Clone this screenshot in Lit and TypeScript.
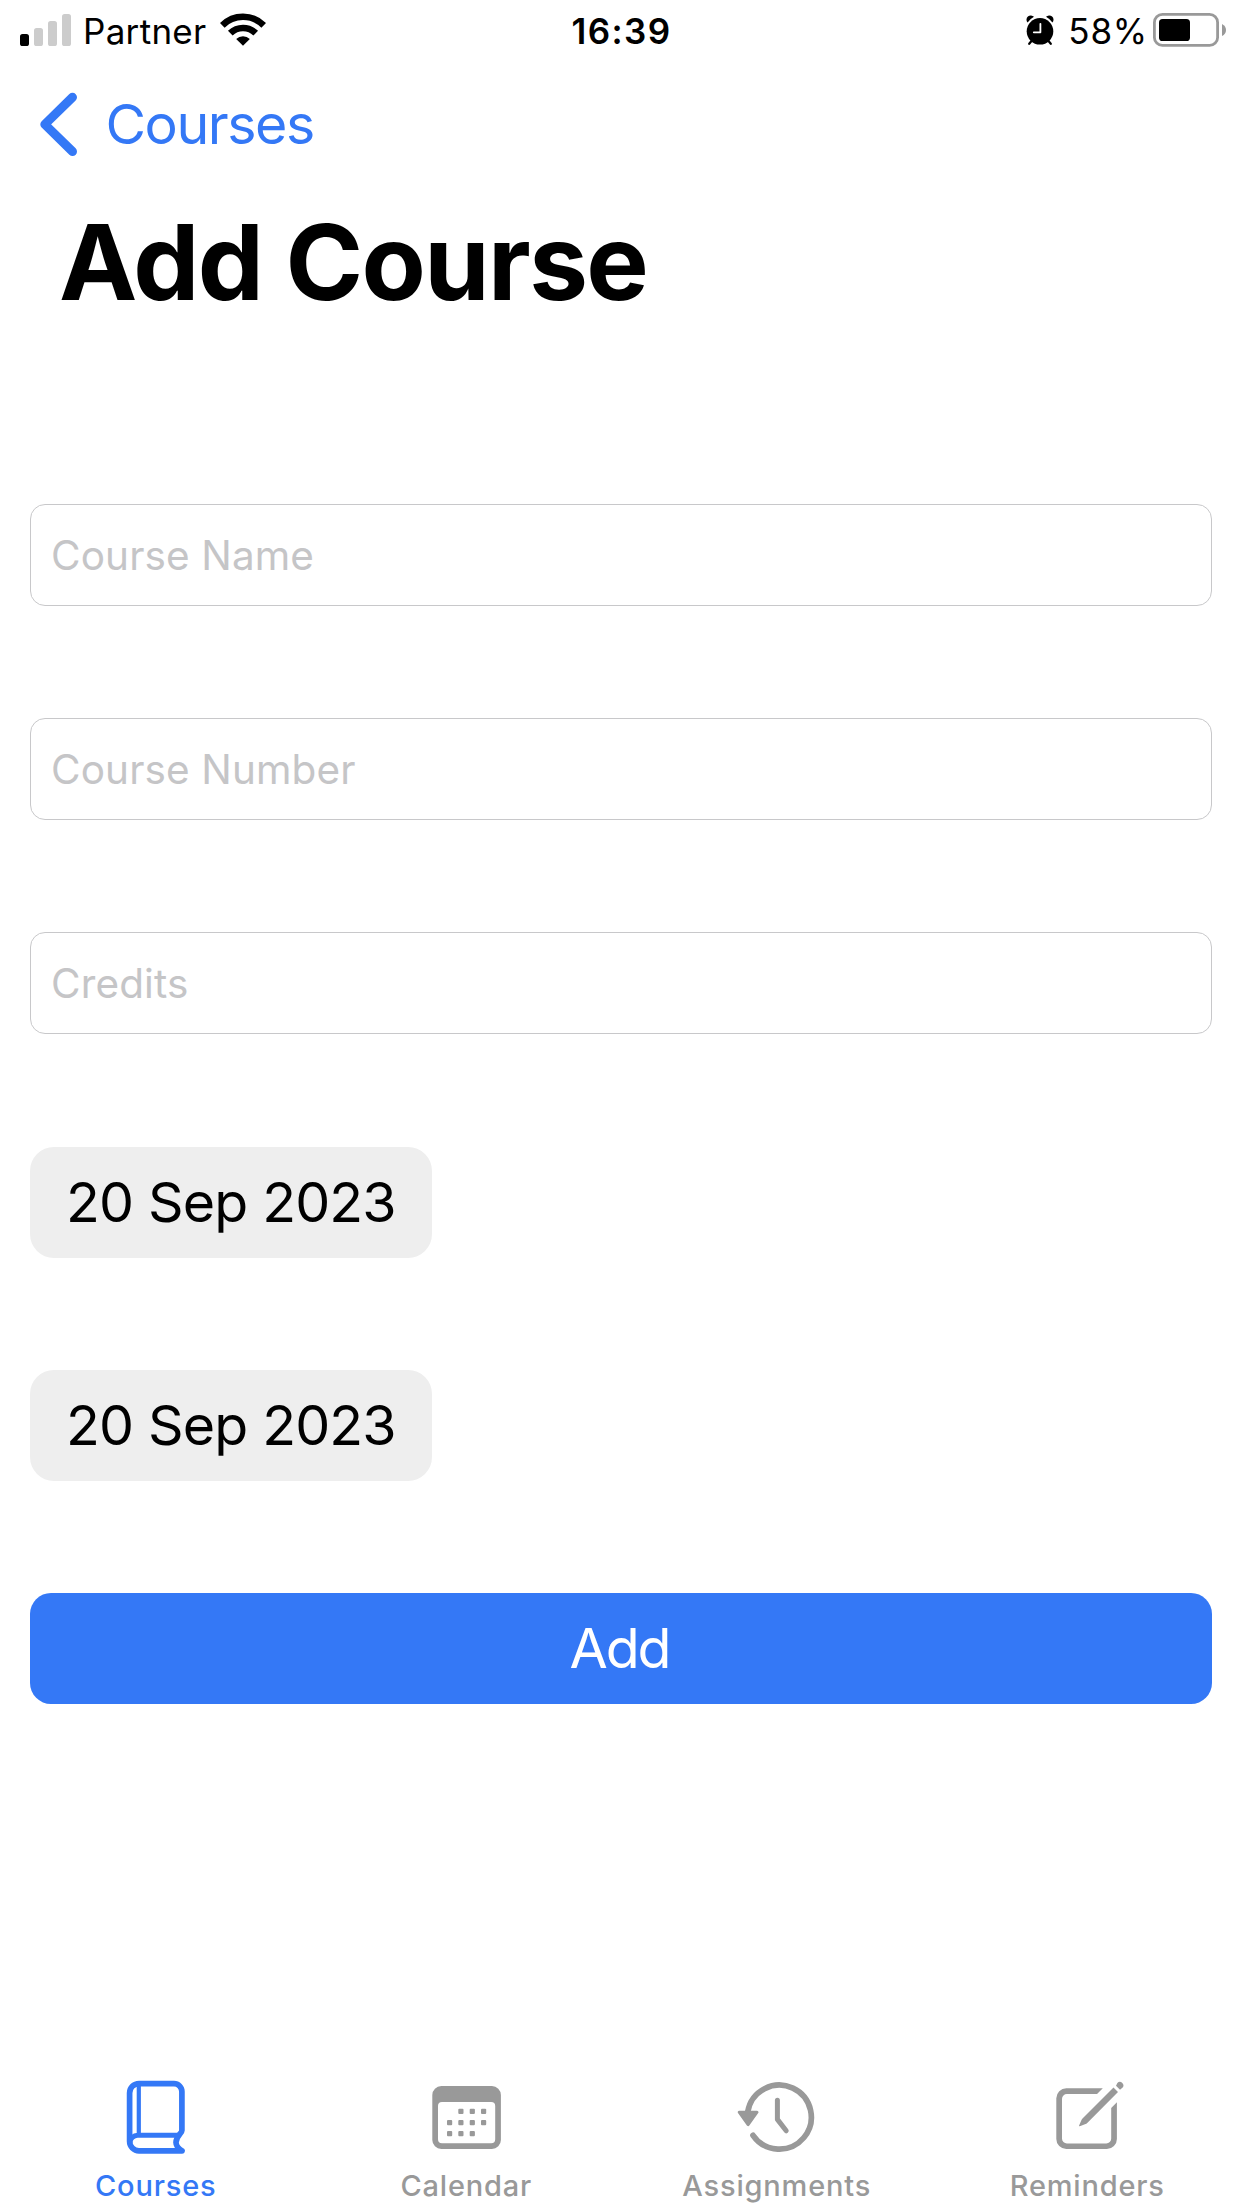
import { LitElement, html, css, svg } from "lit";
import { customElement, property } from "lit/decorators.js";

const DOTS: [number, number][] = [
  [34.9, 35.4], [46.3, 35.4], [57.6, 35.4],
  [23.6, 46.6], [34.9, 46.6], [46.3, 46.6], [57.6, 46.6],
  [23.6, 57.7], [34.9, 57.7], [46.3, 57.7],
];

const ICONS = {
  book: svg`
    <g fill="none" stroke="currentColor" stroke-width="5.7" stroke-linejoin="round">
      <path stroke-linecap="round" d="M67 74.8H24A9.5 9.5 0 0 1 14.6 65.3V17A9.4 9.4 0 0 1 24 7.6H59A7.9 7.9 0 0 1 66.9 15.5V54.5C66.9 57.5 61 60 61 66.5C61 70 63.5 72.5 67 74.8"/>
      <path stroke-width="5" d="M14.8 67A8 8 0 0 1 23 59.2H63.5"/>
      <path stroke-width="4.2" d="M23.8 8V59"/>
    </g>`,
  calendar: svg`
    <path fill="currentColor" fill-rule="evenodd" d="M15.3 10H65.9A9 9 0 0 1 74.9 19V64A9 9 0 0 1 65.9 73H15.3A9 9 0 0 1 6.3 64V19A9 9 0 0 1 15.3 10ZM16 26A4 4 0 0 0 12 30V63.2A4 4 0 0 0 16 67.2H65.2A4 4 0 0 0 69.2 63.2V30A4 4 0 0 0 65.2 26Z"/>
    ${DOTS.map(([x, y]) => svg`<rect x=${x - 2.6} y=${y - 2.6} width="5.2" height="5.2" rx="1" fill="currentColor"/>`)}`,
  history: svg`
    <path fill="none" stroke="currentColor" stroke-width="5.7" stroke-linecap="round" d="M11.8 35.5A32 32 0 1 1 17 59.3"/>
    <path fill="currentColor" stroke="currentColor" stroke-width="3" stroke-linejoin="round" d="M3.2 36.2H21L12.1 48.6Z"/>
    <path fill="none" stroke="currentColor" stroke-width="5" stroke-linecap="round" stroke-linejoin="round" d="M41.4 24.2V43.4L50.2 54.8"/>`,
  compose: svg`
    <path fill="currentColor" d="M55.8 12.3H19.3A10 10 0 0 0 9.3 22.3V63A10 10 0 0 0 19.3 73H59.9A10 10 0 0 0 69.9 63V26.2L64.2 31.9V62.5A4.9 4.9 0 0 1 59.3 67.4H19.9A4.9 4.9 0 0 1 15 62.5V23A4.9 4.9 0 0 1 19.9 18.1H50Z"/>
    <path fill="currentColor" d="M66.5 11.4L71 16L40 47.2Q39.4 47.7 38.6 48L32.8 50.3Q31.8 50.5 32.1 49.5L34.6 43.7Q34.9 43 35.5 42.4Z"/>
    <path fill="currentColor" d="M69 9.7L70.4 7.1Q72.6 4.6 75.3 6.9Q77.6 9.6 75.4 11.8L73 13.7Z"/>`,
};

@customElement("status-bar")
export class StatusBar extends LitElement {
  static styles = css`
    :host { display: grid; grid-template-columns: 1fr auto 1fr; height: 62px; padding: 0 16px 0 20px; box-sizing: border-box; color: #000; font-size: 35px; line-height: 62px; }
    .side { display: flex; white-space: nowrap; }
    .end { justify-content: flex-end; }
    .carrier { width: 137px; margin-left: 12px; letter-spacing: 0.3px; }
    .time { font-weight: 600; letter-spacing: 1.4px; padding-right: 3px; }
    .level { letter-spacing: 0.79px; margin: 0 5px 0 14px; }
    svg { display: block; flex: none; }
  `;
  render() {
    return html`
      <div class="side">
        <svg width="51" height="62" viewBox="20 0 51 62">
          <rect x="20" y="34" width="9" height="12" rx="2.6"/>
          <g fill="#ccc">
            <rect x="34" y="28" width="9" height="18" rx="2.6"/>
            <rect x="48" y="21" width="9" height="25" rx="2.6"/>
            <rect x="62" y="14" width="9" height="32" rx="2.6"/>
          </g>
        </svg>
        <span class="carrier">Partner</span>
        <svg width="46" height="62" viewBox="220 0 46 62">
          <g fill="none" stroke="#000" stroke-width="6.6">
            <path d="M222.3 25.3A29.3 29.3 0 0 1 263.7 25.3"/>
            <path d="M230.300 33.200A18 18 0 0 1 255.700 33.200"/>
          </g>
          <path d="M243 45.8L236.2 39.100A9.700 9.700 0 0 1 249.800 39.100Z"/>
        </svg>
      </div>
      <span class="time">16:39</span>
      <div class="side end">
        <svg width="28" height="62" viewBox="1026 0 28 62">
          <circle cx="1040" cy="31.3" r="13.3"/>
          <path d="M1027.6 22.6A4.3 4.3 0 0 1 1034 16.800A17.500 17.500 0 0 0 1027.600 22.600ZM1052.400 22.600A4.300 4.300 0 0 0 1046 16.800A17.500 17.500 0 0 1 1052.400 22.600Z"/>
          <path fill="none" stroke="#000" stroke-width="2.200" stroke-linecap="round" d="M1031.500 41L1029.200 43.800M1048.500 41L1050.800 43.800"/>
          <path fill="none" stroke="#fff" stroke-width="1.800" stroke-linecap="round" stroke-linejoin="round" d="M1040.400 23.800V32.300H1033.800"/>
        </svg>
        <span class="level">58%</span>
        <svg width="73" height="62" viewBox="1153 0 73 62">
          <rect x="1154.400" y="14.400" width="63.200" height="31" rx="8" fill="none" stroke="#999" stroke-width="2.800"/>
          <rect x="1159" y="19" width="31" height="22" rx="3.600"/>
          <path fill="#999" d="M1222 24Q1226 26 1226 30T1222 36Z"/>
        </svg>
      </div>`;
  }
}

@customElement("tab-item")
export class TabItem extends LitElement {
  @property() icon: keyof typeof ICONS = "book";
  @property() label = "";
  @property({ type: Boolean, reflect: true }) active = false;
  static styles = css`
    :host { display: flex; flex-direction: column; align-items: center; color: #999; }
    :host([active]) { color: #3478f6; }
    svg { display: block; }
    .label { margin-top: 10px; padding-left: 1px; font-size: 29px; line-height: 40px; font-weight: 500; letter-spacing: 0.82px; }
  `;
  render() {
    return html`<svg width="80" height="80" viewBox="0 0 80 80">${ICONS[this.icon]}</svg>
      <span class="label">${this.label}</span>`;
  }
}

@customElement("app-root")
export class AppRoot extends LitElement {
  static styles = css`
    :host { display: flex; flex-direction: column; height: 2208px; background: #fff; color: #000; font-family: Inter, "Liberation Sans", sans-serif; overflow: hidden; }
    .nav { display: flex; align-items: center; height: 124px; padding-left: 38px; color: #3478f6; font-size: 55.5px; letter-spacing: -1.45px; }
    .nav svg { display: block; width: 42px; margin-right: 25.5px; }
    .nav span { padding-bottom: 2px; }
    h1 { margin: 0; padding-left: 59px; font-size: 105px; line-height: 151px; font-weight: 700; letter-spacing: -1.66px; }
    .form { display: flex; flex-direction: column; align-items: flex-start; gap: 112px; padding: 167px 30px 0; }
    .field, .date, .submit { box-sizing: border-box; font-family: inherit; margin: 0; }
    .field { width: 100%; height: 102px; padding: 0 20px; border: 1px solid #c8c8ca; border-radius: 15px; background: #fff; font-size: 40.5px; letter-spacing: 0.12px; outline: none; }
    .field::placeholder { color: #c5c5c7; opacity: 1; }
    .date { display: flex; align-items: center; width: 402px; height: 111px; padding: 0 0 2px 36px; border-radius: 24px; background: #eee; font-size: 55.5px; letter-spacing: -0.84px; white-space: nowrap; }
    .first { margin-top: 1px; }
    .submit { width: 100%; height: 111px; padding: 0 3px 2px 0; border: 0; border-radius: 21px; background: #3478f6; color: #fff; font-size: 55.5px; letter-spacing: -2.14px; }
    .tabs { display: grid; grid-template-columns: repeat(4, 1fr); height: 132px; margin-top: auto; }
  `;
  render() {
    return html`
      <status-bar></status-bar>
      <div class="nav">
        <svg height="70" viewBox="38 89 42 70"><path d="M72.500 97.300L44.800 124.400L72.500 151.500" fill="none" stroke="currentColor" stroke-width="9" stroke-linecap="round" stroke-linejoin="round"/></svg>
        <span>Courses</span>
      </div>
      <h1>Add Course</h1>
      <div class="form">
        ${["Course Name", "Course Number", "Credits"].map((p) => html`<input class="field" placeholder=${p} />`)}
        <div class="date first">20 Sep 2023</div>
        <div class="date">20 Sep 2023</div>
        <button class="submit">Add</button>
      </div>
      <div class="tabs">
        <tab-item icon="book" label="Courses" active></tab-item>
        <tab-item icon="calendar" label="Calendar"></tab-item>
        <tab-item icon="history" label="Assignments"></tab-item>
        <tab-item icon="compose" label="Reminders"></tab-item>
      </div>`;
  }
}
